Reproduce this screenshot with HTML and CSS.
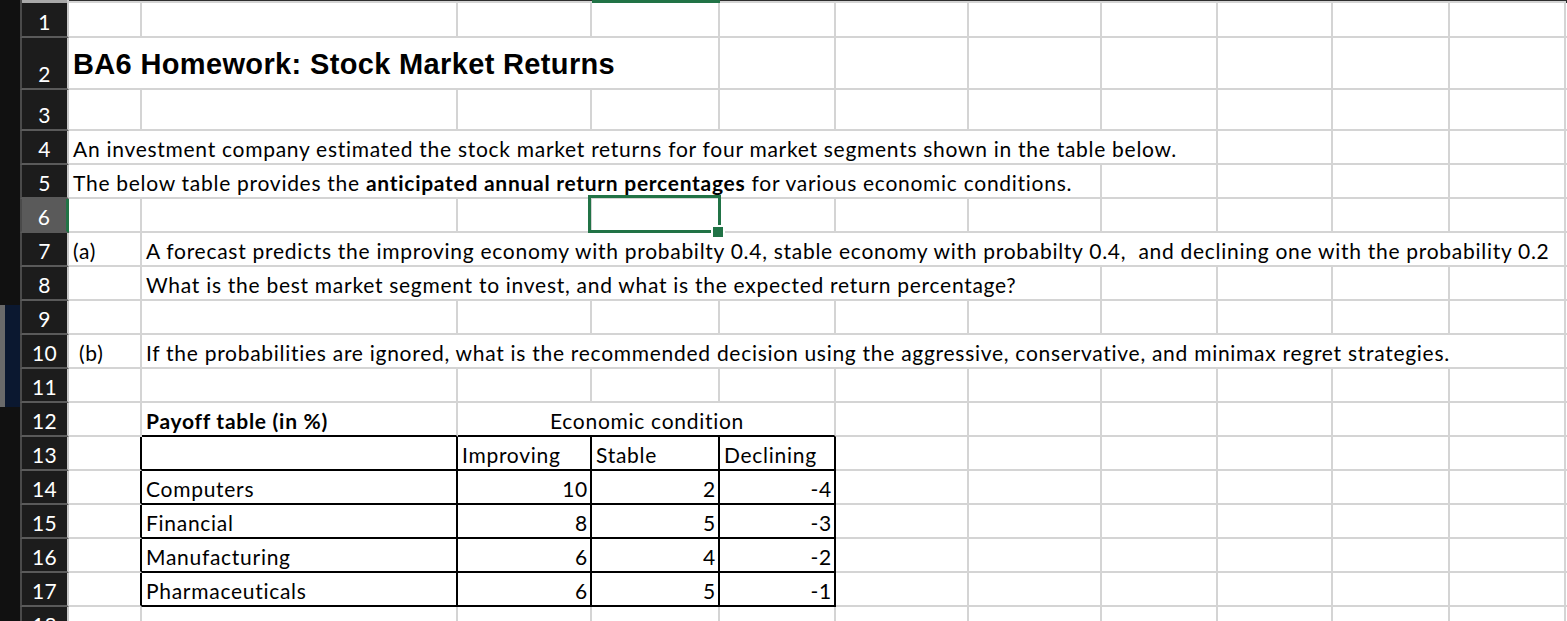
FILE: index.html
```html
<!DOCTYPE html>
<html>
<head>
<meta charset="utf-8">
<link rel="stylesheet" href="styles.css">
</head>
<body>
<div class="app">
  <div class="gutter"><div class="thumb"><span class="thumb-a"></span><span class="thumb-b"></span></div></div>
  <div class="sheet">
    <div class="row top">
      <div class="t-hdr"></div><div class="t"></div><div class="t"></div><div class="t"></div><div class="t sel-col"></div><div class="t"></div><div class="t"></div><div class="t"></div><div class="t"></div><div class="t"></div><div class="t"></div><div class="t"></div><div class="t-m"></div>
    </div>
    <div class="row r1">
      <div class="hdr">1</div><div class="c"></div><div class="c"></div><div class="c"></div><div class="c"></div><div class="c"></div><div class="c"></div><div class="c"></div><div class="c"></div><div class="c"></div><div class="c"></div><div class="c"></div><div class="m"></div>
    </div>
    <div class="row r2">
      <div class="hdr">2</div><div class="c s4 title">BA6 Homework: Stock Market Returns</div><div class="c"></div><div class="c"></div><div class="c"></div><div class="c"></div><div class="c"></div><div class="c"></div><div class="c"></div><div class="m"></div>
    </div>
    <div class="row r3">
      <div class="hdr">3</div><div class="c"></div><div class="c"></div><div class="c"></div><div class="c"></div><div class="c"></div><div class="c"></div><div class="c"></div><div class="c"></div><div class="c"></div><div class="c"></div><div class="c"></div><div class="m"></div>
    </div>
    <div class="row">
      <div class="hdr">4</div><div class="c s8">An investment company estimated the stock market returns for four market segments shown in the table below.</div><div class="c"></div><div class="c"></div><div class="c"></div><div class="m"></div>
    </div>
    <div class="row">
      <div class="hdr">5</div><div class="c s7">The below table provides the&nbsp;<b>anticipated annual return percentages</b>&nbsp;for various economic conditions.</div><div class="c"></div><div class="c"></div><div class="c"></div><div class="c"></div><div class="m"></div>
    </div>
    <div class="row">
      <div class="hdr hdr-sel">6</div><div class="c"></div><div class="c"></div><div class="c"></div><div class="c active"><span class="sel-box"></span><span class="sel-handle"></span></div><div class="c"></div><div class="c"></div><div class="c"></div><div class="c"></div><div class="c"></div><div class="c"></div><div class="c"></div><div class="m"></div>
    </div>
    <div class="row">
      <div class="hdr">7</div><div class="c">(a)</div><div class="c s10">A forecast predicts the improving economy with probabilty 0.4, stable economy with probabilty 0.4,&nbsp; and declining one with the probability 0.2</div><div class="m"></div>
    </div>
    <div class="row">
      <div class="hdr">8</div><div class="c"></div><div class="c s6">What is the best market segment to invest, and what is the expected return percentage?</div><div class="c"></div><div class="c"></div><div class="c"></div><div class="c"></div><div class="m"></div>
    </div>
    <div class="row">
      <div class="hdr">9</div><div class="c"></div><div class="c"></div><div class="c"></div><div class="c"></div><div class="c"></div><div class="c"></div><div class="c"></div><div class="c"></div><div class="c"></div><div class="c"></div><div class="c"></div><div class="m"></div>
    </div>
    <div class="row">
      <div class="hdr">10</div><div class="c indent">(b)</div><div class="c s10">If the probabilities are ignored, what is the recommended decision using the aggressive, conservative, and minimax regret strategies.</div><div class="m"></div>
    </div>
    <div class="row">
      <div class="hdr">11</div><div class="c"></div><div class="c"></div><div class="c"></div><div class="c"></div><div class="c"></div><div class="c"></div><div class="c"></div><div class="c"></div><div class="c"></div><div class="c"></div><div class="c"></div><div class="m"></div>
    </div>
    <div class="row">
      <div class="hdr">12</div><div class="c"></div><div class="c bb"><b>Payoff table (in %)</b></div><div class="c s3 bb center">Economic condition</div><div class="c"></div><div class="c"></div><div class="c"></div><div class="c"></div><div class="c"></div><div class="c"></div><div class="m"></div>
    </div>
    <div class="row">
      <div class="hdr">13</div><div class="c br"></div><div class="c tb"></div><div class="c tb">Improving</div><div class="c tb">Stable</div><div class="c tb">Declining</div><div class="c"></div><div class="c"></div><div class="c"></div><div class="c"></div><div class="c"></div><div class="c"></div><div class="m"></div>
    </div>
    <div class="row">
      <div class="hdr">14</div><div class="c br"></div><div class="c tb">Computers</div><div class="c tb num">10</div><div class="c tb num">2</div><div class="c tb num">-4</div><div class="c"></div><div class="c"></div><div class="c"></div><div class="c"></div><div class="c"></div><div class="c"></div><div class="m"></div>
    </div>
    <div class="row">
      <div class="hdr">15</div><div class="c br"></div><div class="c tb">Financial</div><div class="c tb num">8</div><div class="c tb num">5</div><div class="c tb num">-3</div><div class="c"></div><div class="c"></div><div class="c"></div><div class="c"></div><div class="c"></div><div class="c"></div><div class="m"></div>
    </div>
    <div class="row">
      <div class="hdr">16</div><div class="c br"></div><div class="c tb">Manufacturing</div><div class="c tb num">6</div><div class="c tb num">4</div><div class="c tb num">-2</div><div class="c"></div><div class="c"></div><div class="c"></div><div class="c"></div><div class="c"></div><div class="c"></div><div class="m"></div>
    </div>
    <div class="row">
      <div class="hdr">17</div><div class="c br"></div><div class="c tb">Pharmaceuticals</div><div class="c tb num">6</div><div class="c tb num">5</div><div class="c tb num">-1</div><div class="c"></div><div class="c"></div><div class="c"></div><div class="c"></div><div class="c"></div><div class="c"></div><div class="m"></div>
    </div>
    <div class="row">
      <div class="hdr">18</div><div class="c"></div><div class="c"></div><div class="c"></div><div class="c"></div><div class="c"></div><div class="c"></div><div class="c"></div><div class="c"></div><div class="c"></div><div class="c"></div><div class="c"></div><div class="m"></div>
    </div>
  </div>
</div>
</body>
</html>
```

FILE: styles.css
```css
* { box-sizing: border-box; }
html, body { margin: 0; padding: 0; background: #fff; overflow: hidden; }
body { width: 1567px; height: 621px; }

.app {
  display: flex;
  height: 621px;
  overflow: hidden;
  font-family: "Lato", "Liberation Sans", sans-serif;
  font-size: 21px;
  letter-spacing: 0.72px;
  color: #000;
}

.gutter {
  width: 20px;
  flex: none;
  background: #111;
  display: flex;
  flex-direction: column;
}
.thumb {
  margin-top: 305px;
  height: 102px;
  display: flex;
}
.thumb-a { width: 5px; background: #6a6a6a; }
.thumb-b { flex: 1; background: #0b1830; }

.sheet { flex: 1; display: flex; flex-direction: column; }

.row {
  display: grid;
  grid-template-columns: 49px 73px 316px 134px 128px 116px 133px 133px 116px 115px 117px 116px 1fr;
  height: 34px;
  flex: none;
}
.row.top { height: 3px; }
.row.r1 { height: 35px; }
.row.r2 { height: 52px; }
.row.r3 { height: 41px; }

.t-hdr { background: #a8a8a8; border-left: 2px solid #4a4a4a; border-right: 2px solid #c8c8c8; }
.t { border-top: 1px solid #2e2e2e; background: #d4d4d4; }
.t.sel-col { background: #217346; border-top-color: #217346; }
.t-m { background: #2e2e2e; }

.hdr {
  background: #1c1c1c;
  color: #fff;
  border-left: 2px solid #4a4a4a;
  border-right: 2px solid #c8c8c8;
  border-bottom: 2px solid #5a5a5a;
  display: flex;
  align-items: flex-end;
  justify-content: center;
  line-height: 1.2;
  padding-bottom: 2px;
  font-size: 21px;
  letter-spacing: 0.3px;
}
.hdr-sel { background: #5a5a5a; border-right-color: #217346; border-right-width: 3px; }

.c {
  border-right: 2px solid #d4d4d4;
  border-bottom: 2px solid #d4d4d4;
  display: flex;
  align-items: flex-end;
  white-space: nowrap;
  line-height: 1.2;
  padding: 0 2px 2px 4px;
  position: relative;
}
.m { border-bottom: 2px solid #d4d4d4; }

.s3 { grid-column: span 3; }
.s4 { grid-column: span 4; }
.s6 { grid-column: span 6; }
.s7 { grid-column: span 7; }
.s8 { grid-column: span 8; }
.s10 { grid-column: span 10; }

.title {
  font-family: "Liberation Sans", Arial, sans-serif;
  font-weight: bold;
  font-size: 29px;
  letter-spacing: 0.35px;
  padding-bottom: 6px;
}
.indent { padding-left: 10px; }
.center { justify-content: center; }
.num { justify-content: flex-end; }

.bb { border-bottom-color: #000; }
.br { border-right-color: #000; }
.tb { border-right-color: #000; border-bottom-color: #000; }

.sel-box {
  position: absolute;
  left: -4px;
  top: -4px;
  width: 133px;
  height: 38px;
  border: 3px solid #217346;
  z-index: 2;
}
.sel-handle {
  position: absolute;
  left: 119px;
  top: 26px;
  width: 14px;
  height: 14px;
  background: #217346;
  border: 2px solid #fff;
  z-index: 3;
}
```
